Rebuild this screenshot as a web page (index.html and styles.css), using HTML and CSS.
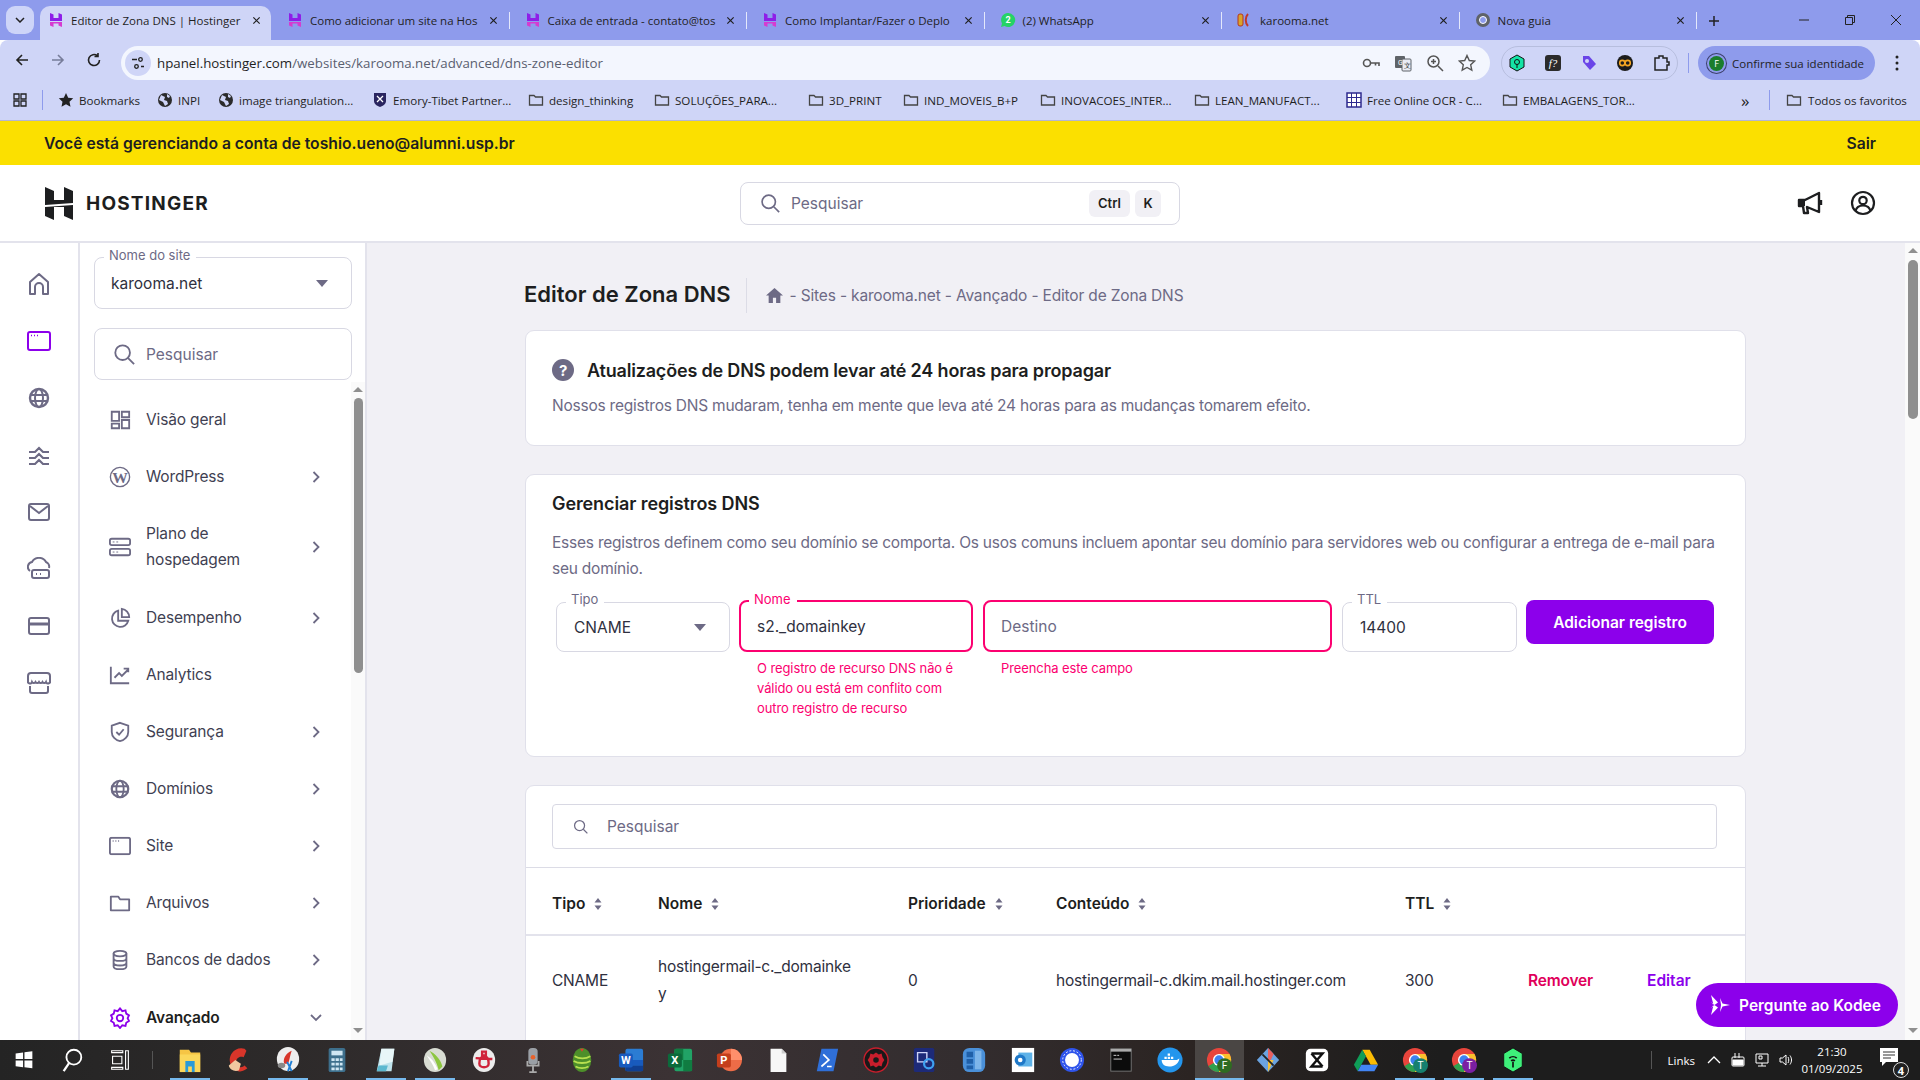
FILE: index.html
```html
<!DOCTYPE html>
<html lang="pt-BR">
<head>
<meta charset="utf-8">
<title>Editor de Zona DNS | Hostinger</title>
<link rel="stylesheet" href="styles.css">
</head>
<body>
<svg class="defs" width="0" height="0" aria-hidden="true">
  <symbol id="fav" viewBox="0 0 16 16"><path d="M2 1l3.500 1.500V6h5V1L14 2.500V9H2z" fill="#8e1ee8"/><path d="M2 10h12v5l-3.500-1.500V11.500h-5V15L2 13.500z" fill="#d63bd0"/></symbol>
  <symbol id="x" viewBox="0 0 10 10"><path d="M1.500 1.500l7 7M8.500 1.500l-7 7" stroke="#1f1f1f" stroke-width="1.300" fill="none"/></symbol>
  <symbol id="folder" viewBox="0 0 16 16"><path d="M1.500 3.500h4.500l1.500 1.500h7v8h-13z" fill="none" stroke="#444" stroke-width="1.300"/></symbol>
  <symbol id="globe" viewBox="0 0 16 16"><circle cx="8" cy="8" r="7" fill="#2b2b2b"/><path d="M4 3l4 2-1 3 3 1 1 3-3 2-2-4-4-2zM10 2l3 2-1 2-2-1z" fill="#cfd5f7"/></symbol>
  <symbol id="gt" viewBox="0 0 24 24"><path d="M2 9h6l4-4 4 4h6M2 15h6l4-4 4 4h6M2 21h6l4-4 4 4h6" fill="none" stroke="#6d6a85" stroke-width="2.200"/></symbol>
  <symbol id="chev" viewBox="0 0 10 14"><path d="M2.500 2l5 5-5 5" fill="none" stroke="#6d6a85" stroke-width="1.800"/></symbol>
  <symbol id="sort" viewBox="0 0 10 14"><path d="M5 1l3.500 4.500h-7zM5 13L1.500 8.500h7z" fill="#6d6a85"/></symbol>
  <symbol id="search" viewBox="0 0 24 24"><circle cx="10.500" cy="10.500" r="8" fill="none" stroke="#6d6a85" stroke-width="2"/><path d="M16.500 16.500L23 23" stroke="#6d6a85" stroke-width="2"/></symbol>
  <symbol id="siteicon" viewBox="0 0 24 20"><rect x="1" y="1" width="22" height="18" rx="2" fill="none" stroke="currentColor" stroke-width="2"/><path d="M4 4.500h1M7 4.500h1M10 4.500h1" stroke="currentColor" stroke-width="1.500"/></symbol>
  <symbol id="globe2" viewBox="0 0 24 24"><circle cx="12" cy="12" r="9" fill="none" stroke="#6d6a85" stroke-width="2.400"/><ellipse cx="12" cy="12" rx="4" ry="9" fill="none" stroke="#6d6a85" stroke-width="2"/><path d="M3 9h18M3 15h18" stroke="#6d6a85" stroke-width="2"/></symbol>
  <symbol id="chrome" viewBox="0 0 28 28"><circle cx="14" cy="14" r="13" fill="#e8453c"/><path d="M14 14L2.700 20.500A13 13 0 0 0 14 27a13 13 0 0 0 6-1.500z" fill="#2fa14f"/><path d="M14 7.500h11.300A13 13 0 0 1 14 27z" fill="#fbc02d"/><circle cx="14" cy="14" r="6.500" fill="#fff"/><circle cx="14" cy="14" r="5" fill="#3d82f0"/></symbol>
</svg>

<div class="tabstrip">
  <div class="tabmenu"><svg class="tm" viewBox="0 0 10 6"><path d="M1 1l4 4 4-4" fill="none" stroke="#222" stroke-width="1.500"/></svg></div>
  <div class="tabs">
    <div class="tab active"><svg class="fav"><use href="#fav"/></svg><span class="tt">Editor de Zona DNS | Hostinger</span><svg class="xi"><use href="#x"/></svg></div>
    <div class="tab"><svg class="fav"><use href="#fav"/></svg><span class="tt">Como adicionar um site na Hos</span><svg class="xi"><use href="#x"/></svg></div>
    <div class="tab sep"><svg class="fav"><use href="#fav"/></svg><span class="tt">Caixa de entrada - contato@tos</span><svg class="xi"><use href="#x"/></svg></div>
    <div class="tab sep"><svg class="fav"><use href="#fav"/></svg><span class="tt">Como Implantar/Fazer o Deplo</span><svg class="xi"><use href="#x"/></svg></div>
    <div class="tab sep"><svg class="fav" viewBox="0 0 16 16"><path d="M8 1a7 7 0 0 0-6 10.500L1 15l3.600-1A7 7 0 1 0 8 1z" fill="#25d366"/><text x="8" y="11" font-size="9" font-weight="700" text-anchor="middle" fill="#fff" font-family="Roboto">2</text></svg><span class="tt">(2) WhatsApp</span><svg class="xi"><use href="#x"/></svg></div>
    <div class="tab sep"><svg class="fav" viewBox="0 0 16 16"><rect x="1" y="2" width="5" height="12" rx="2" fill="#d8a32a" stroke="#b5371f"/><path d="M11 2C8 5 8 11 11 14" fill="none" stroke="#c0392b" stroke-width="2"/></svg><span class="tt">karooma.net</span><svg class="xi"><use href="#x"/></svg></div>
    <div class="tab sep"><svg class="fav" viewBox="0 0 16 16"><circle cx="8" cy="8" r="7" fill="#5f6368"/><circle cx="8" cy="8" r="3.500" fill="#8d9bec" stroke="#fff"/></svg><span class="tt">Nova guia</span><svg class="xi"><use href="#x"/></svg></div>
    <div class="plus"><svg viewBox="0 0 12 12"><path d="M6 1v10M1 6h10" stroke="#222" stroke-width="1.500"/></svg></div>
  </div>
  <div class="winbtns">
    <svg viewBox="0 0 12 12"><path d="M1 6h10" stroke="#222"/></svg>
    <svg viewBox="0 0 12 12"><path d="M3.500 3.500V1.500h7v7h-2M1.500 3.500h7v7h-7z" fill="none" stroke="#222"/></svg>
    <svg viewBox="0 0 12 12"><path d="M1 1l10 10M11 1L1 11" stroke="#222"/></svg>
  </div>
</div>

<div class="toolbar">
  <svg class="nav" viewBox="0 0 16 16"><path d="M14 8H3M8 3L3 8l5 5" fill="none" stroke="#222" stroke-width="1.600"/></svg>
  <svg class="nav" viewBox="0 0 16 16"><path d="M2 8h11M8 3l5 5-5 5" fill="none" stroke="#777d9a" stroke-width="1.600"/></svg>
  <svg class="nav" viewBox="0 0 16 16"><path d="M13.500 8A5.500 5.500 0 1 1 11.500 3.800M12 1v3.500H8.500" fill="none" stroke="#222" stroke-width="1.600"/></svg>
  <div class="addr">
    <span class="site"><svg viewBox="0 0 16 16"><path d="M2 4.500h5M11 11.500h3" stroke="#222" stroke-width="1.400"/><circle cx="10.500" cy="4.500" r="1.800" fill="none" stroke="#222" stroke-width="1.300"/><circle cx="6.500" cy="11.500" r="1.800" fill="none" stroke="#222" stroke-width="1.300"/></svg></span>
    <span class="url"><b>hpanel.hostinger.com</b>/websites/karooma.net/advanced/dns-zone-editor</span>
    <span class="addr-ic">
      <svg viewBox="0 0 18 18"><circle cx="5" cy="9" r="3.500" fill="none" stroke="#555" stroke-width="1.600"/><path d="M8.500 9H17v3M13.500 9v2.500" fill="none" stroke="#555" stroke-width="1.600"/></svg>
      <svg viewBox="0 0 18 18"><rect x="1" y="2" width="10" height="12" rx="1" fill="#5f6368"/><rect x="8" y="5" width="9" height="12" rx="1" fill="#e9ebf5" stroke="#5f6368"/><text x="4" y="11" font-size="7" fill="#fff" font-family="Roboto">G</text><text x="10" y="14" font-size="7" fill="#333" font-family="Roboto">文</text></svg>
      <svg viewBox="0 0 18 18"><circle cx="7.500" cy="7.500" r="5.500" fill="none" stroke="#555" stroke-width="1.500"/><path d="M12 12l5 5M5 7.500h5M7.500 5v5" stroke="#555" stroke-width="1.500"/></svg>
      <svg viewBox="0 0 18 18"><path d="M9 1.500l2.300 5 5.400.6-4 3.700 1.100 5.400L9 13.500l-4.800 2.700 1.100-5.400-4-3.700 5.400-.6z" fill="none" stroke="#555" stroke-width="1.400"/></svg>
    </span>
  </div>
  <div class="extgroup">
    <svg viewBox="0 0 18 18"><path d="M9 1l7 4v8l-7 4-7-4V5z" fill="#14e3a6" stroke="#111"/><circle cx="9" cy="8" r="2.500" fill="none" stroke="#111"/><path d="M9 10v4" stroke="#111"/></svg>
    <svg viewBox="0 0 18 18"><rect x="1" y="1" width="16" height="16" rx="3" fill="#2b2b2b"/><text x="9" y="13" font-size="11" font-style="italic" text-anchor="middle" fill="#fff" font-family="Liberation Serif">f?</text></svg>
    <svg viewBox="0 0 18 18"><path d="M3 2h6l7 8-6 6-7-8z" fill="#6a45e8"/><circle cx="7" cy="7" r="2" fill="#cfd5f7"/></svg>
    <svg viewBox="0 0 18 18"><circle cx="9" cy="9" r="8" fill="#1c1c1c"/><circle cx="6.300" cy="9" r="2.600" fill="none" stroke="#f5a623" stroke-width="1.600"/><circle cx="11.700" cy="9" r="2.600" fill="none" stroke="#f5a623" stroke-width="1.600"/></svg>
    <svg viewBox="0 0 18 18"><path d="M3 4h4V2h4v2h4v4h2v3h-2v5H3z" fill="none" stroke="#222" stroke-width="1.500"/></svg>
  </div>
  <div class="vsep"></div>
  <div class="profile"><span class="pf">F</span><span>Confirme sua identidade</span></div>
  <svg class="kebab" viewBox="0 0 4 16"><circle cx="2" cy="2" r="1.500" fill="#222"/><circle cx="2" cy="8" r="1.500" fill="#222"/><circle cx="2" cy="14" r="1.500" fill="#222"/></svg>
</div>

<div class="bookmarks">
  <svg class="apps" viewBox="0 0 14 14"><path d="M1 1h5v5H1zM8 1h5v5H8zM1 8h5v5H1zM8 8h5v5H8z" fill="none" stroke="#222" stroke-width="1.300"/></svg>
  <span class="vsep small"></span>
  <div class="bm-grid">
    <span class="bm"><svg viewBox="0 0 16 16"><path d="M8 1l2.200 4.700 5 .6-3.700 3.400 1 5L8 12.300l-4.500 2.400 1-5L.8 6.300l5-.6z" fill="#222"/></svg>Bookmarks</span>
    <span class="bm"><svg><use href="#globe"/></svg>INPI</span>
    <span class="bm"><svg><use href="#globe"/></svg>image triangulation...</span>
    <span class="bm"><svg viewBox="0 0 16 16"><path d="M2 1h12v8c0 3-3 5-6 6-3-1-6-3-6-6z" fill="#2a2560"/><path d="M5 4l6 6M11 4l-6 6" stroke="#fff" stroke-width="1.300"/></svg>Emory-Tibet Partner...</span>
    <span class="bm"><svg><use href="#folder"/></svg>design_thinking</span>
    <span class="bm"><svg><use href="#folder"/></svg>SOLUÇÕES_PARA...</span>
    <span class="bm"><svg><use href="#folder"/></svg>3D_PRINT</span>
    <span class="bm"><svg><use href="#folder"/></svg>IND_MOVEIS_B+P</span>
    <span class="bm"><svg><use href="#folder"/></svg>INOVACOES_INTER...</span>
    <span class="bm"><svg><use href="#folder"/></svg>LEAN_MANUFACT...</span>
    <span class="bm"><svg viewBox="0 0 16 16"><rect x="1" y="1" width="14" height="14" fill="#fff" stroke="#2e2a8f" stroke-width="1.500"/><path d="M5.500 1v14M10.500 1v14M1 5.500h14M1 10.500h14" stroke="#2e2a8f"/></svg>Free Online OCR - C...</span>
    <span class="bm"><svg><use href="#folder"/></svg>EMBALAGENS_TOR...</span>
  </div>
  <span class="more">»</span>
  <span class="vsep small"></span>
  <span class="bm last"><svg><use href="#folder"/></svg>Todos os favoritos</span>
</div>

<div class="banner"><span>Você está gerenciando a conta de toshio.ueno@alumni.usp.br</span><span>Sair</span></div>

<header class="head">
  <div class="logo">
    <svg viewBox="0 0 28 33"><path d="M0 0l9 4v9h10V0l9 4v12L0 18zM0 20l28-2v15l-9-4v-9H9v13l-9-4z" fill="#1d1e20"/></svg>
    <span>HOSTINGER</span>
  </div>
  <div class="hsearch">
    <svg><use href="#search"/></svg><span class="ph">Pesquisar</span>
    <kbd class="kc">Ctrl</kbd><kbd class="kk">K</kbd>
  </div>
  <div class="hicons">
    <svg viewBox="0 0 26 26"><path d="M2 10v6h4l1 7h4l-1-6 12 5V3L8 10z" fill="none" stroke="#1d1e20" stroke-width="2.400" stroke-linejoin="round"/><path d="M2 10h6v6H2z" fill="#1d1e20"/><path d="M24 10v5" stroke="#1d1e20" stroke-width="2.400"/></svg>
    <svg viewBox="0 0 26 26"><circle cx="13" cy="13" r="11" fill="none" stroke="#1d1e20" stroke-width="2.200"/><circle cx="13" cy="10.500" r="3.700" fill="none" stroke="#1d1e20" stroke-width="2.200"/><path d="M5.500 21c1-4 4-5.500 7.500-5.500s6.500 1.500 7.500 5.500" fill="none" stroke="#1d1e20" stroke-width="2.200"/></svg>
  </div>
</header>

<div class="body">
  <nav class="rail">
    <svg viewBox="0 0 24 24"><path d="M3 22V10l9-8 9 8v12h-5v-7a4 4 0 0 0-8 0v7z" fill="none" stroke="#6d6a85" stroke-width="2" stroke-linejoin="round"/></svg>
    <svg class="purple" viewBox="0 0 24 20"><use href="#siteicon"/></svg>
    <svg viewBox="0 0 24 24"><use href="#globe2"/></svg>
    <svg viewBox="0 0 24 24"><use href="#gt"/></svg>
    <svg viewBox="0 0 24 24"><rect x="2" y="4" width="20" height="16" rx="2" fill="none" stroke="#6d6a85" stroke-width="2"/><path d="M3 6l9 7 9-7" fill="none" stroke="#6d6a85" stroke-width="2"/></svg>
    <svg viewBox="0 0 24 24"><path d="M3 14a5 5 0 0 1 2-9 8 8 0 0 1 14 0 5 5 0 0 1 3 6" fill="none" stroke="#6d6a85" stroke-width="2"/><rect x="5" y="13" width="17" height="8" rx="2" fill="none" stroke="#6d6a85" stroke-width="2"/><path d="M9 17h1M13 17h1" stroke="#6d6a85" stroke-width="2"/></svg>
    <svg viewBox="0 0 24 24"><rect x="2" y="4" width="20" height="16" rx="2" fill="none" stroke="#6d6a85" stroke-width="2"/><path d="M2 10h20" stroke="#6d6a85" stroke-width="3"/></svg>
    <svg viewBox="0 0 24 24"><path d="M4 2h16a3 3 0 0 1 3 3v5a2 2 0 0 1-4 1 2 2 0 0 1-3.500 0 2 2 0 0 1-3.500 0 2 2 0 0 1-3.500 0A2 2 0 0 1 5 11a2 2 0 0 1-4-1V5a3 3 0 0 1 3-3zM3 15v5a2 2 0 0 0 2 2h14a2 2 0 0 0 2-2v-5" fill="none" stroke="#6d6a85" stroke-width="2"/></svg>
  </nav>

  <aside class="side">
    <div class="field side-select">
      <label class="flabel">Nome do site</label>
      <span>karooma.net</span>
      <i class="caret"></i>
    </div>
    <div class="side-search"><svg><use href="#search"/></svg><span>Pesquisar</span></div>
    <div class="menu-wrap">
      <ul class="menu">
        <li><svg class="mi" viewBox="0 0 24 24"><path d="M3 3h8v10H3zM14 3h8v6h-8zM3 16h8v5H3zM14 12h8v9h-8z" fill="none" stroke="#6d6a85" stroke-width="2"/></svg><span>Visão geral</span></li>
        <li><svg class="mi" viewBox="0 0 24 24"><circle cx="12" cy="12" r="10.500" fill="none" stroke="#6d6a85" stroke-width="1.500"/><text x="12" y="18.500" font-size="17" font-weight="700" text-anchor="middle" fill="#6d6a85" font-family="Liberation Serif">W</text></svg><span>WordPress</span><svg class="ch"><use href="#chev"/></svg></li>
        <li class="tall"><svg class="mi" viewBox="0 0 24 24"><rect x="1" y="3" width="22" height="7" rx="2" fill="none" stroke="#6d6a85" stroke-width="2"/><rect x="1" y="14" width="22" height="7" rx="2" fill="none" stroke="#6d6a85" stroke-width="2"/><path d="M4 6.500h2M8 6.500h2M4 17.500h2M8 17.500h2" stroke="#6d6a85"/></svg><span>Plano de hospedagem</span><svg class="ch"><use href="#chev"/></svg></li>
        <li><svg class="mi" viewBox="0 0 24 24"><path d="M10 4a9 9 0 1 0 11 11H10z" fill="none" stroke="#6d6a85" stroke-width="2"/><path d="M14 2a9 9 0 0 1 8 9h-8z" fill="none" stroke="#6d6a85" stroke-width="2"/></svg><span>Desempenho</span><svg class="ch"><use href="#chev"/></svg></li>
        <li><svg class="mi" viewBox="0 0 24 24"><path d="M2 3v18h20M6 15l5-5 3 3 7-7M16 5h5v4" fill="none" stroke="#6d6a85" stroke-width="2"/></svg><span>Analytics</span></li>
        <li><svg class="mi" viewBox="0 0 24 24"><path d="M12 2l9 3v7c0 5-4 9-9 10-5-1-9-5-9-10V5z" fill="none" stroke="#6d6a85" stroke-width="2"/><path d="M8 12l3 3 5-6" fill="none" stroke="#6d6a85" stroke-width="2"/></svg><span>Segurança</span><svg class="ch"><use href="#chev"/></svg></li>
        <li><svg class="mi" viewBox="0 0 24 24"><use href="#globe2"/></svg><span>Domínios</span><svg class="ch"><use href="#chev"/></svg></li>
        <li><svg class="mi gray" viewBox="0 0 24 20"><use href="#siteicon"/></svg><span>Site</span><svg class="ch"><use href="#chev"/></svg></li>
        <li><svg class="mi" viewBox="0 0 24 24"><path d="M2 5h8l2 3h10v12H2z" fill="none" stroke="#6d6a85" stroke-width="2" stroke-linejoin="round"/></svg><span>Arquivos</span><svg class="ch"><use href="#chev"/></svg></li>
        <li><svg class="mi" viewBox="0 0 24 24"><ellipse cx="12" cy="5" rx="7" ry="3" fill="none" stroke="#6d6a85" stroke-width="2"/><path d="M5 5v14c0 4 14 4 14 0V5M5 10c0 4 14 4 14 0M5 15c0 4 14 4 14 0" fill="none" stroke="#6d6a85" stroke-width="2"/></svg><span>Bancos de dados</span><svg class="ch"><use href="#chev"/></svg></li>
        <li class="on"><svg class="mi" viewBox="0 0 24 24"><path d="M12 1.500l2.500 3 3.500-.8.800 3.500 3 2-1.500 3 1.500 3-3 2-.8 3.500-3.500-.8-2.500 3-2.500-3-3.500.8-.8-3.500-3-2 1.500-3-1.500-3 3-2 .8-3.500 3.500.8z" fill="none" stroke="#8c00eb" stroke-width="2"/><circle cx="12" cy="12" r="3.500" fill="none" stroke="#8c00eb" stroke-width="2"/></svg><span>Avançado</span><svg class="ch down" viewBox="0 0 14 10"><path d="M2 2l5 5 5-5" fill="none" stroke="#6d6a85" stroke-width="1.800"/></svg></li>
      </ul>
      <div class="sb side-sb"><i class="up"></i><b></b><i class="dn"></i></div>
    </div>
  </aside>

  <main class="main">
    <div class="content">
      <div class="pagehead">
        <h1>Editor de Zona DNS</h1>
        <div class="crumbs"><svg viewBox="0 0 16 14"><path d="M8 0l8 7h-2.500v7H9.500V9h-3v5H2.500V7H0z" fill="#6d6a85"/></svg><span>- Sites - karooma.net - Avançado - Editor de Zona DNS</span></div>
      </div>

      <section class="card notice">
        <h2><svg viewBox="0 0 22 22"><circle cx="11" cy="11" r="11" fill="#6d6a85"/><text x="11" y="16.500" font-size="15" font-weight="700" text-anchor="middle" fill="#fff" font-family="Inter">?</text></svg>Atualizações de DNS podem levar até 24 horas para propagar</h2>
        <p>Nossos registros DNS mudaram, tenha em mente que leva até 24 horas para as mudanças tomarem efeito.</p>
      </section>

      <section class="card manage">
        <h2>Gerenciar registros DNS</h2>
        <p>Esses registros definem como seu domínio se comporta. Os usos comuns incluem apontar seu domínio para servidores web ou configurar a entrega de e-mail para seu domínio.</p>
        <div class="form">
          <div class="fcol f-tipo"><div class="field"><label class="flabel">Tipo</label><span>CNAME</span><i class="caret"></i></div></div>
          <div class="fcol f-nome"><div class="field err"><label class="flabel">Nome</label><span>s2._domainkey</span></div><div class="errmsg">O registro de recurso DNS não é válido ou está em conflito com outro registro de recurso</div></div>
          <div class="fcol f-dest"><div class="field err"><span class="ph">Destino</span></div><div class="errmsg">Preencha este campo</div></div>
          <div class="fcol f-ttl"><div class="field"><label class="flabel">TTL</label><span>14400</span></div></div>
          <button class="add">Adicionar registro</button>
        </div>
      </section>

      <section class="card records">
        <div class="tsearch-wrap"><div class="tsearch"><svg><use href="#search"/></svg><span>Pesquisar</span></div></div>
        <div class="row thead">
          <span>Tipo<svg><use href="#sort"/></svg></span>
          <span>Nome<svg><use href="#sort"/></svg></span>
          <span>Prioridade<svg><use href="#sort"/></svg></span>
          <span>Conteúdo<svg><use href="#sort"/></svg></span>
          <span>TTL<svg><use href="#sort"/></svg></span>
          <span></span><span></span>
        </div>
        <div class="row tbody">
          <span>CNAME</span>
          <span class="brk">hostingermail-c._domainkey</span>
          <span>0</span>
          <span>hostingermail-c.dkim.mail.hostinger.com</span>
          <span>300</span>
          <span class="rm">Remover</span>
          <span class="ed">Editar</span>
        </div>
      </section>
    </div>
    <div class="sb main-sb"><i class="up"></i><b></b><i class="dn"></i></div>
  </main>
  <button class="kodee"><svg viewBox="0 0 22 22"><path d="M2 1l7 7.500L5.500 11 2 8l2.500 3L2 14l3.500-3L9 13.500 2 21l2.500-10zM11 4l2.500 5.500L21 11l-7.500 1.500L11 18l1-7z" fill="#fff"/></svg>Pergunte ao Kodee</button>
</div>

<footer class="taskbar">
  <span class="tb sys"><svg viewBox="0 0 28 28"><path d="M5 7l8-1.200V13H5zM14.500 5.600L23 4.500V13h-8.500zM5 14.500h8v7.200l-8-1.100zM14.500 14.500H23v8.500l-8.500-1.200z" fill="#fff"/></svg></span>
  <span class="tb sys"><svg viewBox="0 0 28 28"><circle cx="16" cy="11" r="8" fill="none" stroke="#fff" stroke-width="2"/><path d="M11 17l-6 9" stroke="#fff" stroke-width="2.400"/></svg></span>
  <span class="tb sys"><svg viewBox="0 0 28 28"><path d="M5 4h12v2H5zM5 22h12v2H5zM6 10h10v8H6zM20 4h3v20h-3z" fill="none" stroke="#fff" stroke-width="1.200"/></svg></span>
  <span class="tsep"></span>
  <span class="tb run"><svg viewBox="0 0 28 28"><path d="M3 3h10l2 3h10v21H3z" fill="#f6c545"/><path d="M3 8h22v19H3z" fill="#fbd75b"/><path d="M9 15h10v12h-3v-6h-4v6H9z" fill="#2a9bd8"/></svg></span>
  <span class="tb"><svg viewBox="0 0 28 28"><path d="M20 2a12 12 0 0 0-7 24c4 1 8-1 10-3l-3-3c-3 3-8 2-9-2-1-5 3-9 8-7l3-7z" fill="#d8352a"/><path d="M3 20l7-6 6 4-2 7c-4 2-10 0-11-5z" fill="#f1c8a0"/></svg></span>
  <span class="tb run"><svg viewBox="0 0 28 28"><ellipse cx="14" cy="13" rx="12" ry="13" fill="#eee"/><path d="M10 18c-2-5 2-12 8-14-2 5-2 10-4 14z" fill="#d8352a"/><path d="M13 16l5 10M18 15l-4 11" stroke="#1e7fd6" stroke-width="2"/><ellipse cx="7" cy="20" rx="4" ry="3" fill="#888"/></svg></span>
  <span class="tb"><svg viewBox="0 0 28 28"><rect x="5" y="1" width="18" height="26" rx="2" fill="#3d6f8c"/><rect x="8" y="4" width="12" height="5" fill="#cfe6f2"/><path d="M8 12h3.500v3H8zM12.500 12H16v3h-3.500zM17 12h3v3h-3zM8 17h3.500v3H8zM12.500 17H16v3h-3.500zM17 17h3v3h-3zM8 22h3.500v3H8zM12.500 22H16v3h-3.500zM17 22h3v3h-3z" fill="#cfe6f2"/></svg></span>
  <span class="tb run"><svg viewBox="0 0 28 28"><path d="M9 2h14l-3 24H4z" fill="#bfe3ec"/><path d="M9 2h14l-2 14-14 4z" fill="#e8f6f8"/><path d="M6 20h10l-2 6H4z" fill="#5cb8cf"/></svg></span>
  <span class="tb run"><svg viewBox="0 0 28 28"><ellipse cx="14" cy="14" rx="12" ry="13" fill="#d8dcd2"/><path d="M8 4c4 6 8 12 10 21l4-4C20 13 14 7 8 4z" fill="#8cc63f"/><path d="M5 9c3 5 7 10 9 16l3-1C14 17 10 12 5 9z" fill="#fff"/></svg></span>
  <span class="tb"><svg viewBox="0 0 28 28"><ellipse cx="14" cy="14" rx="12" ry="13" fill="#ececec"/><path d="M9 18c0-5 2-8 5-8s5 3 5 8-10 5-10 0zM12 5h4v4h-4zM5 12l18 1" fill="none" stroke="#d0233a" stroke-width="2.600"/></svg></span>
  <span class="tb"><svg viewBox="0 0 28 28"><rect x="9" y="1" width="10" height="18" rx="4" fill="#9ba0a6"/><circle cx="14" cy="11" r="2.500" fill="#e8622c"/><path d="M8 15v5h12v-5M14 20v6M10 27h8" fill="none" stroke="#aaa" stroke-width="2"/></svg></span>
  <span class="tb"><svg viewBox="0 0 28 28"><ellipse cx="14" cy="14" rx="10" ry="13" fill="#4d8f2a"/><path d="M6 10c5 3 12 3 17 0M5 15c5 3 13 3 18 0M7 21c4 2 10 2 14 0" stroke="#b8e04f" stroke-width="2" fill="none"/><path d="M12 2l2 3 2-3z" fill="#e33"/></svg></span>
  <span class="tb run"><svg viewBox="0 0 28 28"><rect x="8" y="2" width="19" height="24" rx="2" fill="#2b7cd3"/><path d="M8 14h19v6H8z" fill="#185abd"/><path d="M8 20h19v6H8z" fill="#103f91"/><rect x="1" y="7" width="15" height="15" rx="2" fill="#185abd"/><text x="8.500" y="18.500" font-size="12" font-weight="700" text-anchor="middle" fill="#fff" font-family="Roboto">W</text></svg></span>
  <span class="tb"><svg viewBox="0 0 28 28"><rect x="8" y="2" width="19" height="24" rx="2" fill="#21a366"/><path d="M8 2h9.500v12H8z" fill="#107c41"/><path d="M17.500 14H27v12h-9.500z" fill="#107c41"/><rect x="1" y="7" width="15" height="15" rx="2" fill="#0b6a3b"/><text x="8.500" y="18.500" font-size="12" font-weight="700" text-anchor="middle" fill="#fff" font-family="Roboto">X</text></svg></span>
  <span class="tb"><svg viewBox="0 0 28 28"><circle cx="16" cy="14" r="12" fill="#ed6c47"/><path d="M16 2a12 12 0 0 1 12 12H16z" fill="#ff8f6b"/><rect x="1" y="7" width="15" height="15" rx="2" fill="#c43e1c"/><text x="8.500" y="18.500" font-size="12" font-weight="700" text-anchor="middle" fill="#fff" font-family="Roboto">P</text></svg></span>
  <span class="tb"><svg viewBox="0 0 28 28"><path d="M6 2h12l5 5v20H6z" fill="#f7f7f7"/><path d="M18 2l5 5h-5z" fill="#ccc"/></svg></span>
  <span class="tb"><svg viewBox="0 0 28 28"><path d="M8 2h18l-5 24H3z" fill="#2f6fd8"/><path d="M10 8l6 6-8 7M14 21h5" fill="none" stroke="#fff" stroke-width="1.800"/></svg></span>
  <span class="tb"><svg viewBox="0 0 28 28"><circle cx="14" cy="14" r="13" fill="#191919" stroke="#c81e2c" stroke-width="1.500"/><path d="M14 6l3 2 3-1 1 4 2 3-2 3-1 4-3-1-3 2-3-2-3 1-1-4-2-3 2-3 1-4 3 1z" fill="#c81e2c"/><circle cx="14" cy="14" r="3" fill="#191919"/></svg></span>
  <span class="tb"><svg viewBox="0 0 28 28"><rect x="2" y="1" width="22" height="26" rx="2" fill="#1d2a78"/><path d="M6 6h10v10H6z" fill="none" stroke="#cfd5f7" stroke-width="1.500"/><circle cx="18" cy="18" r="5" fill="none" stroke="#3ea2f0" stroke-width="2.400"/></svg></span>
  <span class="tb"><svg viewBox="0 0 28 28"><rect x="2" y="1" width="24" height="26" rx="7" fill="#4a90d9"/><path d="M6 5h7v6H6zM6 13h7v5H6zM6 20h7v4H6z" fill="#1f5fa8"/><path d="M15 4h7v20h-7z" fill="#7db5ea"/></svg></span>
  <span class="tb"><svg viewBox="0 0 28 28"><rect x="2" y="1" width="24" height="26" fill="#fff"/><rect x="9" y="6" width="15" height="15" fill="#5eb2e8"/><circle cx="11" cy="14" r="6" fill="#1f78c8"/><circle cx="11" cy="14" r="2.500" fill="#fff"/></svg></span>
  <span class="tb"><svg viewBox="0 0 28 28"><circle cx="14" cy="14" r="13" fill="#2f54eb"/><circle cx="14" cy="14" r="7.500" fill="#fff"/><circle cx="14" cy="14" r="10" fill="none" stroke="#fff" stroke-width="1" stroke-dasharray="2 2"/></svg></span>
  <span class="tb"><svg viewBox="0 0 28 28"><rect x="3" y="2" width="22" height="24" fill="#0c0c0c" stroke="#777"/><path d="M3 2h22v3H3z" fill="#aaa"/><path d="M6 9h3M10 9h2M6 13h9" stroke="#ddd"/></svg></span>
  <span class="tb"><svg viewBox="0 0 28 28"><circle cx="14" cy="14" r="13.500" fill="#2496ed"/><path d="M5 14h15c2 0 3-1 4-2 0 5-5 9-11 9-5 0-8-3-8-7z" fill="#fff"/><path d="M8 10.500h2.500V13H8zM11.500 10.500H14V13h-2.500zM15 10.500h2.500V13H15zM11.500 7H14v2.500h-2.500z" fill="#fff"/></svg></span>
  <span class="tb active"><svg viewBox="0 0 28 28"><use href="#chrome"/><circle cx="20" cy="20" r="8" fill="#2e6b22"/><text x="20" y="24" font-size="11" text-anchor="middle" fill="#fff" font-family="Roboto">F</text></svg></span>
  <span class="tb"><svg viewBox="0 0 28 28"><path d="M14 1l12 13-12 13L2 14z" fill="#6aa3e0"/><path d="M14 1l6 6.500-6 13z" fill="#e86060"/><path d="M14 14l6 0-6 13z" fill="#f2c037"/><path d="M8 8l12 12" stroke="#222" stroke-width="2"/></svg></span>
  <span class="tb"><svg viewBox="0 0 28 28"><rect x="2" y="2" width="24" height="24" rx="5" fill="#fff"/><path d="M8 7h12L8 21h12M8 7l12 14" fill="none" stroke="#111" stroke-width="2.600"/></svg></span>
  <span class="tb"><svg viewBox="0 0 28 28"><path d="M10 3h8l9 16h-8z" fill="#fbbc04"/><path d="M10 3L1 19l4 7 9-16z" fill="#0f9d58"/><path d="M5 26l4-7h18l-4 7z" fill="#4285f4"/></svg></span>
  <span class="tb run"><svg viewBox="0 0 28 28"><use href="#chrome"/><circle cx="20" cy="20" r="8" fill="#16806f"/><text x="20" y="24" font-size="11" text-anchor="middle" fill="#fff" font-family="Roboto">T</text></svg></span>
  <span class="tb run"><svg viewBox="0 0 28 28"><use href="#chrome"/><circle cx="20" cy="20" r="8" fill="#7b1fa2"/><text x="20" y="24" font-size="11" text-anchor="middle" fill="#fff" font-family="Roboto">T</text></svg></span>
  <span class="tb run"><svg viewBox="0 0 28 28"><path d="M14 1l10 6v14l-10 6L4 21V7z" fill="#3ef07a" stroke="#111"/><path d="M10 12a6 6 0 0 1 8 0M12 15a3 3 0 0 1 4 0M14 16v6" fill="none" stroke="#111" stroke-width="1.800"/></svg></span>
  <div class="tray">
    <span class="tsep"></span>
    <span class="links">Links</span>
    <svg viewBox="0 0 16 16"><path d="M2 11l6-6 6 6" fill="none" stroke="#fff" stroke-width="1.300"/></svg>
    <svg viewBox="0 0 16 16"><rect x="2" y="5" width="12" height="9" rx="1" fill="none" stroke="#fff"/><path d="M5 1v5M9 1v5M3 8h10v5H3z" fill="#fff" stroke="#fff"/></svg>
    <svg viewBox="0 0 16 16"><path d="M2 2h12v9H2zM8 11v3M4 14h8" fill="none" stroke="#fff"/><path d="M5 4h3v3H5z" fill="none" stroke="#fff"/></svg>
    <svg viewBox="0 0 16 16"><path d="M2 6h2.500L8 3v10l-3.500-3H2z" fill="none" stroke="#fff"/><path d="M10 5c1 2 1 4 0 6M12 3.500c2 3 2 6 0 9" fill="none" stroke="#fff"/></svg>
    <span class="clock"><span>21:30</span><span>01/09/2025</span></span>
    <span class="notif"><svg viewBox="0 0 22 22"><path d="M2 1h18v14H8l-4 4v-4H2z" fill="#fff"/><path d="M5 5h12M5 8h12M5 11h8" stroke="#333"/></svg><b>4</b></span>
  </div>
</footer>
</body>
</html>
```

FILE: styles.css
```css
* { box-sizing: border-box; }
html, body { margin: 0; padding: 0; }
body {
  width: 1920px; height: 1080px; overflow: hidden;
  display: flex; flex-direction: column;
  font-family: Inter, "Noto Sans", sans-serif; color: #1d1e20; background: #fff;
}
.defs { position: absolute; }
ul { margin: 0; padding: 0; list-style: none; }
h1, h2, p { margin: 0; }

/* browser chrome */
.tabstrip { height: 40px; background: #8e9bec; display: flex; align-items: flex-end; position: relative; font-family: "Open Sans", sans-serif; flex: none; }
.tabmenu { width: 28px; height: 28px; margin: 0 6px 6px 6px; background: #cdd4f8; border-radius: 9px; display: flex; align-items: center; justify-content: center; }
.tm { width: 10px; height: 6px; }
.tabs { display: grid; grid-template-columns: 231px repeat(6, 237.5px) 40px; height: 34px; }
.tab { display: flex; align-items: center; padding: 0 9px 6px 16px; font-size: 11.500px; color: #1f1f1f; position: relative; min-width: 0; }
.tab.active { background: #cfd5f7; border-radius: 10px 10px 0 0; padding-left: 8px; padding-right: 8px; }
.tab.sep::before { content: ""; position: absolute; left: 0; top: 6px; height: 17px; width: 1px; background: #e4e8fb; }
.fav { width: 16px; height: 16px; flex: none; margin-right: 7px; }
.tt { flex: 1; min-width: 0; white-space: nowrap; margin-right: 8px; }
.xi { width: 9px; height: 9px; flex: none; margin-right: 2px; }
.plus { display: flex; align-items: center; justify-content: center; border-left: 1px solid #e4e8fb; height: 17px; margin-top: 6px; padding-right: 5px; }
.plus svg { width: 12px; height: 12px; }
.winbtns { position: absolute; right: 0; top: 0; height: 40px; display: flex; align-items: center; gap: 34px; padding-right: 18px; }
.winbtns svg { width: 12px; height: 12px; }

.toolbar { height: 40px; flex: none; background: #cfd5f7; display: flex; align-items: center; padding: 0 0 0 14px; border-radius: 8px 8px 0 0; }
.nav { width: 16px; height: 16px; margin-right: 20px; }
.nav:nth-child(3) { margin-right: 19px; }
.addr { width: 1369px; height: 34px; margin-top: 6px; background: #f3f6fe; border-radius: 17px; display: flex; align-items: center; padding: 0 0 0 4px; font-family: "Open Sans", sans-serif; }
.site { width: 26px; height: 26px; border-radius: 50%; background: #cfd5f7; display: flex; align-items: center; justify-content: center; margin-right: 6px; }
.site svg { width: 16px; height: 16px; }
.url { font-size: 13.300px; color: #5a5f70; flex: 1; white-space: nowrap; }
.url b { font-weight: 400; color: #1f1f1f; }
.addr-ic { display: flex; gap: 14px; align-items: center; padding-right: 14px; }
.addr-ic svg { width: 18px; height: 18px; }
.extgroup { width: 177px; height: 34px; margin: 6px 0 0 11px; border: 1px solid #b7bede; border-radius: 17px; display: flex; align-items: center; justify-content: space-between; padding: 0 7px 0 6px; }
.extgroup svg { width: 18px; height: 18px; }
.vsep { width: 1px; height: 20px; margin: 6px 9px 0 10px; background: #8e9bec; display: block; flex: none; }
.profile { width: 177px; height: 34px; margin-top: 6px; border-radius: 17px; background: #8e9bec; display: flex; align-items: center; gap: 8px; padding-left: 11px; font: 11.500px "Open Sans", sans-serif; color: #1f1f1f; white-space: nowrap; }
.pf { width: 15px; height: 15px; border-radius: 50%; background: #1a7d2c; color: #fff; font-size: 9px; display: flex; align-items: center; justify-content: center; box-shadow: 0 0 0 2px #8e9bec, 0 0 0 3px #3c3f6b; flex: none; }
.kebab { width: 4px; height: 16px; margin: 6px 0 0 20px; }

.bookmarks { height: 41px; flex: none; background: #cfd5f7; border-bottom: 1px solid #b4b6d0; display: flex; align-items: center; padding-left: 13px; font: 11.600px "Open Sans", sans-serif; color: #1f1f1f; }
.apps { width: 14px; height: 14px; flex: none; }
.vsep.small { margin: 0 15px 0 15px; height: 20px; }
.bm-grid { display: grid; grid-template-columns: 99px 61px 154px 156px 126px 154px 95px 137px 154px 152px 156px 239px; width: 1683px; flex: none; }
.bm { display: flex; align-items: center; gap: 5px; white-space: nowrap; }
.bm svg { width: 16px; height: 16px; flex: none; }
.more { font-size: 17px; width: 28px; text-align: left; }
.bm.last { gap: 6px; }
.bookmarks .more + .vsep.small { margin: 0 16px 0 0; }

/* banner + header */
.banner { height: 44px; flex: none; background: #fbe000; display: flex; align-items: center; justify-content: space-between; padding: 0 44px; font-size: 15.700px; font-weight: 600; color: #1d1e20; }
.head { height: 78px; border-bottom: 2px solid #e3e3ec; display: flex; align-items: center; padding-left: 45px; flex: none; }
.logo { display: flex; align-items: center; gap: 13px; width: 695px; font-weight: 700; font-size: 19px; letter-spacing: 1.200px; }
.logo svg { width: 28px; height: 33px; }
.hsearch { width: 440px; height: 43px; border: 1px solid #d8d8e3; border-radius: 8px; display: flex; align-items: center; padding: 0 7px 0 19px; font-size: 15.500px; color: #6d6a85; }
.hsearch > svg { width: 20px; height: 20px; margin-right: 11px; }
.hsearch .ph { flex: 1; }
kbd { font-family: Inter, sans-serif; font-size: 13px; font-weight: 600; height: 27px; display: flex; align-items: center; justify-content: center; background: #f1f0f5; border-radius: 6px; color: #1d1e20; }
.kc { width: 41px; margin-right: 5px; }
.kk { width: 26px; margin-right: 11px; }
.hicons { display: flex; gap: 27px; margin-left: 617px; align-items: center; }
.hicons svg { width: 26px; height: 26px; }

/* layout */
.body { flex: 1; min-height: 0; display: flex; position: relative; }
.rail { width: 80px; flex: none; border-right: 2px solid #e3e3ec; display: flex; flex-direction: column; align-items: center; gap: 33px; padding-top: 29px; }
.rail svg { width: 24px; height: 24px; flex: none; }
.rail .purple { color: #8c00eb; height: 20px; margin: 2px 0; }
.side { width: 287px; flex: none; position: relative; border-right: 2px solid #e3e3ec; padding-top: 14px; display: flex; flex-direction: column; }
.field { position: relative; border: 1px solid #d8d8e3; border-radius: 8px; height: 50px; display: flex; align-items: center; padding: 0 17px; font-size: 15.500px; color: #2f3040; }
.flabel { position: absolute; left: 9px; top: -12px; background: #fff; padding: 0 6px 0 5px; font-size: 13px; line-height: 16px; color: #6d6a85; }
.caret { position: absolute; right: 23px; top: 50%; margin-top: -3px; border: 6.500px solid transparent; border-top: 7px solid #6d6a85; border-bottom: 0; }
.side-select { margin: 0 13px 0 14px; height: 52px; padding-left: 16px; }
.side-select .flabel { top: -11px; }
.side-search { margin: 19px 13px 0 14px; height: 52px; border: 1px solid #d8d8e3; border-radius: 8px; display: flex; align-items: center; padding-left: 18px; font-size: 15.500px; color: #6d6a85; flex: none; }
.side-search svg { width: 22px; height: 22px; margin-right: 11px; }
.menu-wrap { flex: 1; min-height: 0; position: relative; margin-top: 2px; overflow: hidden; }
.menu { padding-top: 9px; }
.menu li { height: 57px; display: flex; align-items: center; padding-left: 29px; font-size: 15.500px; letter-spacing: -.15px; color: #3f3f52; position: relative; }
.menu li.tall { height: 84px; line-height: 26px; }
.menu li.tall span { width: 130px; }
.menu li:last-child { margin-top: 1px; }
.mi { width: 22px; height: 22px; flex: none; margin-right: 15px; }
.mi.gray { color: #6d6a85; }
.ch { position: absolute; left: 231px; top: 50%; margin-top: -7px; width: 10px; height: 14px; }
.ch.down { width: 14px; height: 10px; margin-top: -5px; left: 229px; }
.menu li.on { font-weight: 600; color: #1d1e20; }
.sb { position: absolute; background: #fafafa; }
.sb b { position: absolute; background: #8f8f8f; border-radius: 5px; }
.sb i { position: absolute; left: 50%; margin-left: -5px; border: 5px solid transparent; }
.sb .up { border-bottom: 5px solid #8f8f8f; border-top: 0; top: 5px; }
.sb .dn { border-top: 5px solid #8f8f8f; border-bottom: 0; bottom: 7px; }
.side-sb { right: 0; top: 0; bottom: 0; width: 14px; }
.side-sb b { left: 3px; width: 9px; top: 16px; height: 275px; }

.main { flex: 1; min-width: 0; background: #f1f0f5; position: relative; overflow: hidden; padding-right: 15px; }
.content { width: 1221px; margin-left: 158px; }
.main-sb { right: 0; top: 0; bottom: 0; width: 15px; }
.main-sb b { left: 3px; width: 10px; top: 17px; height: 159px; }
.pagehead { height: 87px; display: flex; align-items: center; padding-top: 17px; }
h1 { font-size: 22px; font-weight: 600; margin-left: -1px; padding-right: 15px; border-right: 1px solid #dcdce6; height: 35px; line-height: 33px; white-space: nowrap; }
.crumbs { display: flex; align-items: center; margin-left: 19px; font-size: 15.500px; letter-spacing: -.17px; color: #6d6a85; gap: 7px; }
.crumbs svg { width: 17px; height: 15px; }
.card { background: #fff; border: 1px solid #e0e0ea; border-radius: 9px; margin-bottom: 28px; }
.card h2 { font-size: 18px; font-weight: 600; }
.card p { font-size: 15.500px; line-height: 26px; color: #6d6a85; letter-spacing: -.23px; }
.notice { height: 116px; padding: 26px 26px 0 26px; }
.notice h2 { display: flex; align-items: center; gap: 13px; height: 26px; letter-spacing: -.18px; }
.notice h2 svg { width: 22px; height: 22px; flex: none; }
.notice p { margin-top: 10px; }
.manage { height: 283px; padding: 16px 26px 0 26px; }
.manage h2 { line-height: 26px; letter-spacing: -.1px; }
.manage p { margin-top: 13px; width: 1170px; }
.form { display: flex; margin: 18px 0 0 4px; align-items: flex-start; }
.fcol { flex: none; }
.fcol > .field { margin-top: 2px; }
.f-tipo { width: 174px; margin-right: 9px; }
.f-nome { width: 234px; margin-right: 10px; }
.f-dest { width: 349px; margin-right: 10px; }
.f-ttl { width: 175px; margin-right: 9px; }
.field.err { border: 2px solid #fc0070; height: 52px; margin-top: 0; padding: 0 16px; }
.field.err .flabel { color: #fc0070; left: 8px; top: -11px; }
.field .ph { color: #6d6a85; }
.errmsg { margin: 6px 0 0 18px; font-size: 13px; line-height: 20px; color: #fc0070; letter-spacing: -.1px; }
.add { width: 188px; height: 44px; border: 0; border-radius: 8px; background: #8c00eb; color: #fff; font: 600 15.500px Inter, sans-serif; }

.records { height: 400px; }
.tsearch-wrap { height: 82px; padding: 18px 28px 0 26px; border-bottom: 1px solid #dcdce6; }
.tsearch { height: 45px; border: 1px solid #d8d8e3; border-radius: 4px; display: flex; align-items: center; padding-left: 20px; font-size: 15.500px; color: #6d6a85; }
.tsearch svg { width: 15px; height: 15px; margin-right: 19px; }
.row { display: grid; grid-template-columns: 106px 250px 148px 349px 123px 119px 80px; padding-left: 26px; align-items: center; font-size: 15.500px; }
.thead { height: 68px; border-bottom: 2px solid #e3e3ec; font-weight: 600; padding-top: 5px; }
.thead span { display: flex; align-items: center; gap: 8px; }
.thead svg { width: 10px; height: 14px; }
.tbody { height: 88px; color: #2f3040; letter-spacing: -.2px; }
.brk { width: 198px; word-break: break-all; line-height: 27px; }
.rm { color: #e0005a; font-weight: 600; }
.ed { color: #8c00eb; font-weight: 600; letter-spacing: 0; }
.kodee { position: absolute; left: 1696px; top: 740px; width: 202px; height: 44px; border: 0; border-radius: 22px; background: #8c00eb; color: #fff; font: 600 15.500px Inter, sans-serif; display: flex; align-items: center; gap: 8px; padding-left: 13px; white-space: nowrap; }
.kodee svg { width: 22px; height: 22px; }

/* taskbar */
.taskbar { height: 40px; flex: none; display: flex; background: linear-gradient(90deg, #242424 0, #2d2a2a 15%, #3b3234 35%, #332d2f 50%, #2b2422 62%, #1d1d1d 75%, #1d1d1d 100%); align-items: stretch; }
.tb { width: 49px; flex: none; display: flex; align-items: center; justify-content: center; position: relative; }
.tb.sys { width: 48px; }
.tb svg { width: 26px; height: 26px; }
.tb.run::after { content: ""; position: absolute; left: 4px; right: 5px; bottom: 0; height: 2px; background: #76b9ed; }
.tb.active { background: #4a4644; }
.tb.active::after { content: ""; position: absolute; left: 0; right: 0; bottom: 0; height: 2px; background: #76b9ed; }
.tsep { width: 1px; margin: 11px 12.500px 11px 8px; background: #555; flex: none; }
.tray { margin-left: auto; display: flex; align-items: center; color: #fff; font: 11.500px "Open Sans", sans-serif; padding-right: 14px; gap: 8px; }
.tray > .tsep { align-self: stretch; margin: 11px 8px 11px 0; }
.tray > svg { width: 16px; height: 16px; }
.links { margin-right: 3px; }
.clock { display: flex; flex-direction: column; align-items: center; line-height: 17px; margin-left: -10px; width: 80px; }
.notif { position: relative; width: 28px; height: 26px; margin-left: -2px; }
.notif svg { width: 22px; height: 22px; }
.notif b { position: absolute; right: -3px; bottom: -5px; width: 16px; height: 16px; border-radius: 50%; border: 1px solid #ddd; background: #222; font-size: 11px; display: flex; align-items: center; justify-content: center; }
```
